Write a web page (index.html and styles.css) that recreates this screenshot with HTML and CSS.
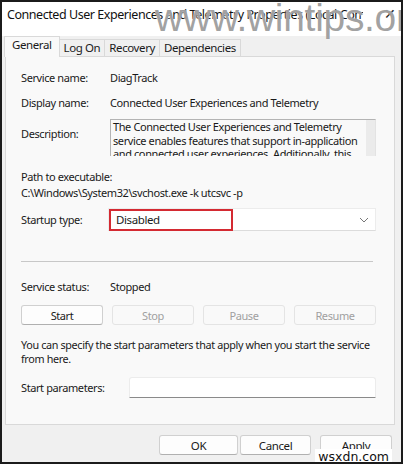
FILE: index.html
```html
<!DOCTYPE html>
<html lang="en">
<head>
    <meta charset="UTF-8">
    <title>Service Properties</title>
    <link rel="stylesheet" href="styles.css">
</head>
<body>
    <div class="window">
        <div class="titlebar">
            <span class="title">Connected User Experiences and Telemetry Properties (Local Computer)</span>
            <span class="close">&#x2715;</span>
        </div>

        <div class="tabs">
            <div class="tab active">General</div>
            <div class="tab">Log On</div>
            <div class="tab">Recovery</div>
            <div class="tab">Dependencies</div>
        </div>

        <div class="panel">
            <div class="row first">
                <span class="label">Service name:</span>
                <span>DiagTrack</span>
            </div>
            <div class="row">
                <span class="label">Display name:</span>
                <span>Connected User Experiences and Telemetry</span>
            </div>
            <div class="row desc-row">
                <span class="label">Description:</span>
                <div class="desc">
                    <p>The Connected User Experiences and Telemetry service enables features that support in-application and connected user experiences. Additionally, this service manages the event driven collection and transmission of diagnostic and usage information.</p>
                    <div class="scrollbar"></div>
                </div>
            </div>
            <div class="path-label">Path to executable:</div>
            <div class="path">C:\Windows\System32\svchost.exe -k utcsvc -p</div>
            <div class="row startup">
                <span class="label">Startup type:</span>
                <div class="combo">
                    <span class="combo-value">Disabled</span>
                    <svg class="chevron" width="10" height="6" viewBox="0 0 10 6"><path d="M1 1 L5 5 L9 1" fill="none" stroke="#777" stroke-width="1"/></svg>
                </div>
            </div>

            <hr class="sep">

            <div class="row">
                <span class="label">Service status:</span>
                <span>Stopped</span>
            </div>
            <div class="controls">
                <button class="btn">Start</button>
                <button class="btn" disabled>Stop</button>
                <button class="btn" disabled>Pause</button>
                <button class="btn" disabled>Resume</button>
            </div>
            <p class="hint">You can specify the start parameters that apply when you start the service from here.</p>
            <div class="params">
                <span class="label">Start parameters:</span>
                <div class="input"></div>
            </div>
        </div>

        <div class="footer">
            <button class="btn ok">OK</button>
            <button class="btn cancel">Cancel</button>
            <button class="btn apply">Apply</button>
        </div>

        <div class="mark">www.wintips.org</div>
        <div class="site">wsxdn.com</div>
    </div>
</body>
</html>
```

FILE: styles.css
```css
* {
    margin: 0;
    padding: 0;
    box-sizing: border-box;
}
body {
    font-family: "Segoe UI", "Noto Sans", Arial, sans-serif;
    font-size: 11px;
    letter-spacing: -0.4px;
    color: #1a1a1a;
    background: #fff;
}
.window {
    position: relative;
    width: 403px;
    height: 464px;
    border: 2px solid #1b1b1b;
    background: #f0f0f0;
    overflow: hidden;
}
.titlebar {
    height: 34px;
    display: flex;
    align-items: flex-start;
    padding: 4px 0 0 5px;
    background: #fff;
}
.title {
    width: 356px;
    white-space: nowrap;
    overflow: hidden;
    font-size: 12.5px;
    letter-spacing: -0.45px;
    color: #111;
}
.close {
    margin-left: 21px;
    font-size: 14px;
    line-height: 16px;
    color: #222;
}
.tabs {
    display: flex;
    align-items: flex-end;
    height: 20px;
    padding-left: 3px;
    background: #f0f0f0;
}
.tab {
    height: 17px;
    padding: 0 4px;
    border: 1px solid #d9d9d9;
    border-bottom: none;
    background: #f0f0f0;
    line-height: 16px;
    font-size: 11.5px;
    margin-left: -1px;
}
.tab.active {
    background: #f9f9f9;
    padding: 0 7px;
    position: relative;
    z-index: 1;
    margin-bottom: -1px;
    height: 21px;
}
.panel {
    margin: 0 6px 0 3px;
    height: 369px;
    border: 1px solid #d9d9d9;
    background: #f9f9f9;
    padding: 0 18px 0 15px;
}
.row {
    display: grid;
    grid-template-columns: 89px 1fr;
    align-items: center;
    line-height: 15px;
    margin-top: 10px;
}
.row.first {
    margin-top: 13px;
}
.desc-row {
    align-items: start;
    margin-top: 9px;
}
.desc-row .label {
    margin-top: 7px;
}
.desc {
    position: relative;
    height: 37px;
    overflow: hidden;
    border: 1px solid #b4b4b4;
    border-right-color: #e3e3e3;
    border-bottom: none;
    background: #f9f9f9;
    padding: 0 12px 0 2px;
}
.desc p {
    line-height: 13.5px;
    font-size: 11px;
}
.scrollbar {
    position: absolute;
    top: 0;
    right: 0;
    width: 9px;
    height: 100%;
    background: #ebebeb;
}
.path-label {
    margin-top: 13px;
    line-height: 15px;
}
.path {
    margin-top: 1px;
    line-height: 15px;
}
.startup {
    margin-top: 8px;
}
.combo {
    display: flex;
    align-items: center;
    justify-content: space-between;
    height: 23px;
    margin-left: -2px;
    background: #fff;
    border: 1px solid #ececec;
    border-bottom-color: #dcdcdc;
    padding-right: 6px;
}
.combo-value {
    width: 124px;
    height: 22px;
    border: 2px solid #d42a32;
    padding-left: 5px;
    line-height: 18px;
    font-size: 11.5px;
}
.sep {
    border: none;
    border-top: 1px solid #c8c8c8;
    margin: 30px 3px 0 0;
}
.sep + .row {
    margin-top: 17px;
}
.controls {
    display: grid;
    grid-template-columns: repeat(4, 82px);
    gap: 9px;
    margin-top: 11px;
}
.btn {
    height: 20px;
    font-family: inherit;
    font-size: 11px;
    letter-spacing: -0.4px;
    color: #1a1a1a;
    background: #fdfdfd;
    border: 1px solid #d0d0d0;
    border-bottom-color: #b0b0b0;
    border-radius: 3px;
}
.btn:disabled {
    color: #a0a0a0;
    background: #f9f9f9;
    border-color: #e4e4e4;
}
.hint {
    margin-top: 13px;
    line-height: 14px;
    font-size: 10.8px;
    letter-spacing: -0.35px;
}
.params {
    display: flex;
    align-items: center;
    margin-top: 11px;
}
.params .label {
    width: 108px;
}
.input {
    flex: 1;
    height: 21px;
    background: #fff;
    border: 1px solid #ececec;
    border-bottom: 1px solid #8a8a8a;
    border-radius: 3px 3px 0 0;
}
.footer {
    display: flex;
    padding: 10px 0 0 157px;
}
.footer .btn {
    height: 20px;
    font-size: 11.5px;
}
.ok {
    width: 79px;
}
.cancel {
    width: 71px;
    margin-left: 2px;
}
.apply {
    width: 72px;
    margin-left: 9px;
}
.mark {
    position: absolute;
    top: -6px;
    left: 153px;
    font-family: "Liberation Sans", Arial, sans-serif;
    font-size: 39px;
    letter-spacing: -0.3px;
    color: rgba(120, 120, 120, 0.7);
    text-shadow: 0 0 1px #fff;
    pointer-events: none;
}
.site {
    position: absolute;
    right: 9px;
    bottom: -2px;
    padding: 0 3px;
    background: #fff;
    font-family: "DejaVu Sans", sans-serif;
    font-size: 12.5px;
    letter-spacing: 0;
    line-height: 15px;
    color: #111;
}
```
